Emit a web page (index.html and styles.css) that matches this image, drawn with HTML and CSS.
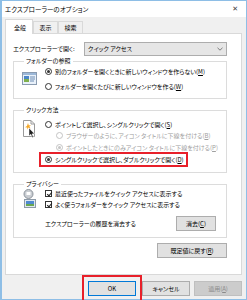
FILE: index.html
```html
<!DOCTYPE html>
<html lang="ja">

<head>
    <meta charset="utf-8">
    <title>エクスプローラーのオプション</title>
    <link rel="stylesheet" href="styles.css">
</head>

<body>
    <div class="fenster">
        <div class="titel">
            <span>エクスプローラーのオプション</span>
            <span class="luk">✕</span>
        </div>

        <div class="krop">
            <nav class="faner">
                <div class="fane valgt">全般</div>
                <div class="fane">表示</div>
                <div class="fane">検索</div>
            </nav>

            <section class="panel">
                <div class="aabn">
                    <span>エクスプローラーで開く:</span>
                    <div class="combo">
                        <span>クイック アクセス</span>
                        <svg width="6" height="4" viewBox="0 0 6 4"><path d="M0.5 0.8 L3 3.2 L5.5 0.8" fill="none" stroke="#707070" stroke-width="0.9"/></svg>
                    </div>
                </div>

                <fieldset class="gruppe g1">
                    <legend>フォルダーの参照</legend>
                    <div class="ikon">
                        <svg width="15" height="15" viewBox="0 0 15 15">
                            <rect x="0.5" y="1.5" width="14" height="12" fill="#e9f1fa" stroke="#8a9bb0"/>
                            <rect x="1" y="2" width="13" height="2" fill="#9cb8d8"/>
                            <rect x="2" y="5" width="5" height="6" fill="#4a86c8"/>
                            <rect x="2" y="8" width="5" height="3" fill="#7fb04c"/>
                            <rect x="8" y="5.5" width="5" height="1" fill="#6f8eb4"/>
                            <rect x="8" y="7.5" width="5" height="1" fill="#6f8eb4"/>
                            <rect x="8" y="9.5" width="4" height="1" fill="#6f8eb4"/>
                        </svg>
                    </div>
                    <div class="valg">
                        <div class="raekke"><span class="radio til"></span><span>別のフォルダーを開くときに新しいウィンドウを作らない(<u>M</u>)</span></div>
                        <div class="raekke"><span class="radio"></span><span>フォルダーを開くたびに新しいウィンドウを作る(<u>W</u>)</span></div>
                    </div>
                </fieldset>

                <fieldset class="gruppe g2">
                    <legend>クリック方法</legend>
                    <div class="ikon">
                        <svg width="15" height="19" viewBox="0 0 15 19">
                            <path d="M1.5 1.5 H9 L12.5 5 V17.5 H1.5 Z" fill="#ffffff" stroke="#9a9a9a"/>
                            <path d="M9 1.5 V5 H12.5" fill="none" stroke="#9a9a9a"/>
                            <path d="M6 4 L6.8 6.5 L9 6 L7.4 7.6 L8.6 9.6 L6.4 8.6 L5.4 10.8 L5.2 8.4 L3 8.2 L5 7 Z" fill="#f5a623"/>
                            <path d="M7 9 V17 L8.8 15.3 L10.2 18.4 L11.4 17.9 L10 14.9 L12.4 14.7 Z" fill="#202020" stroke="#ffffff" stroke-width="0.5"/>
                        </svg>
                    </div>
                    <div class="valg">
                        <div class="raekke"><span class="radio"></span><span>ポイントして選択し、シングルクリックで開く(<u>S</u>)</span></div>
                        <div class="raekke ind slukket"><span class="radio"></span><span>ブラウザーのように、アイコン タイトルに下線を付ける(<u>B</u>)</span></div>
                        <div class="raekke ind slukket"><span class="radio til"></span><span>ポイントしたときにのみアイコン タイトルに下線を付ける(<u>P</u>)</span></div>
                        <div class="raekke markeret"><span class="radio til"></span><span>シングルクリックで選択し、ダブルクリックで開く(<u>D</u>)</span></div>
                    </div>
                </fieldset>

                <fieldset class="gruppe g3">
                    <legend>プライバシー</legend>
                    <div class="ikon">
                        <svg width="15" height="20" viewBox="0 0 15 20">
                            <circle cx="6.5" cy="5" r="4.5" fill="#c9cdd2" stroke="#8d949c"/>
                            <rect x="4.5" y="3" width="4" height="3" fill="#ffffff"/>
                            <rect x="2.5" y="10.5" width="11" height="8" fill="#dfe8f0" stroke="#8d9aa8"/>
                            <rect x="4" y="12" width="8" height="3" fill="#4f8ad0"/>
                            <rect x="4" y="15" width="8" height="2" fill="#6aa84f"/>
                        </svg>
                    </div>
                    <div class="valg">
                        <div class="raekke"><span class="check"></span><span>最近使ったファイルをクイック アクセスに表示する</span></div>
                        <div class="raekke"><span class="check"></span><span>よく使うフォルダーをクイック アクセスに表示する</span></div>
                        <div class="historik">
                            <span>エクスプローラーの履歴を消去する</span>
                            <button class="knap slet">消去(<u>C</u>)</button>
                        </div>
                    </div>
                </fieldset>

                <div class="nulstil">
                    <button class="knap">既定値に戻す(<u>R</u>)</button>
                </div>
            </section>

            <div class="bund">
                <button class="knap ok">OK</button>
                <button class="knap">キャンセル</button>
                <button class="knap" disabled>適用(<u>A</u>)</button>
            </div>
        </div>
    </div>
</body>

</html>
```

FILE: styles.css
```css
* {
    margin: 0;
    padding: 0;
    box-sizing: border-box;
}

body {
    width: 247px;
    height: 300px;
    overflow: hidden;
    background-color: #ffffff;
    font-family: "Noto Sans CJK JP", "Noto Sans", sans-serif;
    font-feature-settings: "palt";
    font-size: 6px;
    line-height: 8px;
    color: #000000;
}

.fenster {
    width: 247px;
    height: 300px;
    border: 1px solid #8ebee6;
    border-left-width: 2px;
    display: flex;
    flex-direction: column;
}

.titel {
    height: 16px;
    background-color: #ffffff;
    display: flex;
    justify-content: space-between;
    align-items: center;
    padding-left: 3px;
    padding-right: 8px;
    font-size: 6.5px;
}

.luk {
    font-family: "DejaVu Sans", sans-serif;
    font-size: 7px;
    color: #404040;
}

.krop {
    flex: 1;
    background-color: #f0f0f0;
    padding-left: 3px;
    padding-right: 4px;
    padding-top: 2px;
}

.faner {
    display: flex;
    align-items: flex-end;
    height: 15px;
    position: relative;
    z-index: 1;
}

.fane {
    height: 12px;
    padding-top: 2px;
    text-align: center;
    border: 1px solid #d9d9d9;
    border-bottom: none;
    background-color: #f0f0f0;
    width: 25px;
    margin-bottom: 1px;
}

.fane.valgt {
    width: 28px;
    height: 15px;
    padding-top: 4px;
    background-color: #ffffff;
    margin-bottom: 0;
    padding-left: 2px;
}

.panel {
    height: 242px;
    margin-top: -1px;
    background-color: #ffffff;
    border: 1px solid #d9d9d9;
    padding-left: 7px;
    padding-right: 14px;
    padding-top: 8px;
}

.aabn {
    display: flex;
    align-items: center;
    height: 14px;
}

.aabn > span {
    width: 71px;
}

.combo {
    flex: 1;
    height: 14px;
    background-color: #e6e6e6;
    border: 1px solid #adadad;
    display: flex;
    align-items: center;
    justify-content: space-between;
    padding-left: 3px;
    padding-right: 3px;
}

.gruppe {
    border: 1px solid #dcdcdc;
    display: flex;
    padding-left: 8px;
    padding-right: 4px;
    margin-top: 7px;
}

.g1 {
    margin-top: 1px;
    padding-bottom: 6px;
}

.g2 {
    padding-top: 5px;
    padding-bottom: 7px;
}

.g3 {
    padding-bottom: 6px;
}

.gruppe legend {
    padding-left: 2px;
    padding-right: 2px;
    margin-left: 2px;
    line-height: 8px;
}

.ikon {
    width: 23px;
    padding-top: 6px;
}

.g2 .ikon {
    padding-top: 0;
}

.g3 .ikon {
    padding-top: 1px;
}

.valg {
    flex: 1;
    display: flex;
    flex-direction: column;
}

.g1 .valg {
    gap: 4px;
    padding-top: 1px;
}

.raekke {
    height: 11px;
    display: flex;
    align-items: center;
    gap: 3px;
    white-space: nowrap;
}

.g2 .raekke + .raekke {
    margin-top: 0px;
}

.g2 .raekke.ind + .raekke {
    margin-top: 1px;
}

.ind {
    padding-left: 11px;
}

.slukket {
    color: #a0a0a0;
}

.radio {
    width: 7px;
    height: 7px;
    border: 1px solid #333333;
    border-radius: 50%;
    background-color: #ffffff;
    display: flex;
    align-items: center;
    justify-content: center;
}

.radio.til::after {
    content: "";
    width: 3px;
    height: 3px;
    border-radius: 50%;
    background-color: #333333;
}

.slukket .radio {
    border-color: #c4c4c4;
}

.slukket .radio.til::after {
    background-color: #c4c4c4;
}

.markeret {
    outline: 2px solid #e8202a;
    outline-offset: 0px;
    margin-left: -4px;
    padding-left: 4px;
    width: 145px;
    margin-top: 1px;
}

.check {
    width: 7px;
    height: 7px;
    border: 1px solid #333333;
    background-color: #ffffff;
    position: relative;
}

.check::after {
    content: "";
    position: absolute;
    left: 1.5px;
    top: -0.5px;
    width: 2px;
    height: 4px;
    border-right: 1px solid #222222;
    border-bottom: 1px solid #222222;
    transform: rotate(40deg);
}

.historik {
    display: flex;
    align-items: center;
    justify-content: space-between;
    margin-top: 6px;
    height: 15px;
}

.knap {
    font-family: inherit;
    font-feature-settings: "palt";
    font-size: 6px;
    line-height: 8px;
    color: #000000;
    background-color: #e1e1e1;
    border: 1px solid #adadad;
    height: 15px;
    width: 48px;
}

.slet {
    width: 40px;
    margin-right: 6px;
}

.nulstil {
    display: flex;
    justify-content: flex-end;
    margin-top: 5px;
}

.nulstil .knap {
    width: 70px;
}

.bund {
    display: flex;
    justify-content: flex-end;
    gap: 4px;
    margin-top: 6px;
}

.ok {
    border-color: #0078d7;
    outline: 2px solid #e8202a;
    outline-offset: 4px;
    margin-right: 2px;
}

.knap:disabled {
    background-color: #cccccc;
    border-color: #bfbfbf;
    color: #8a8a8a;
}
```
